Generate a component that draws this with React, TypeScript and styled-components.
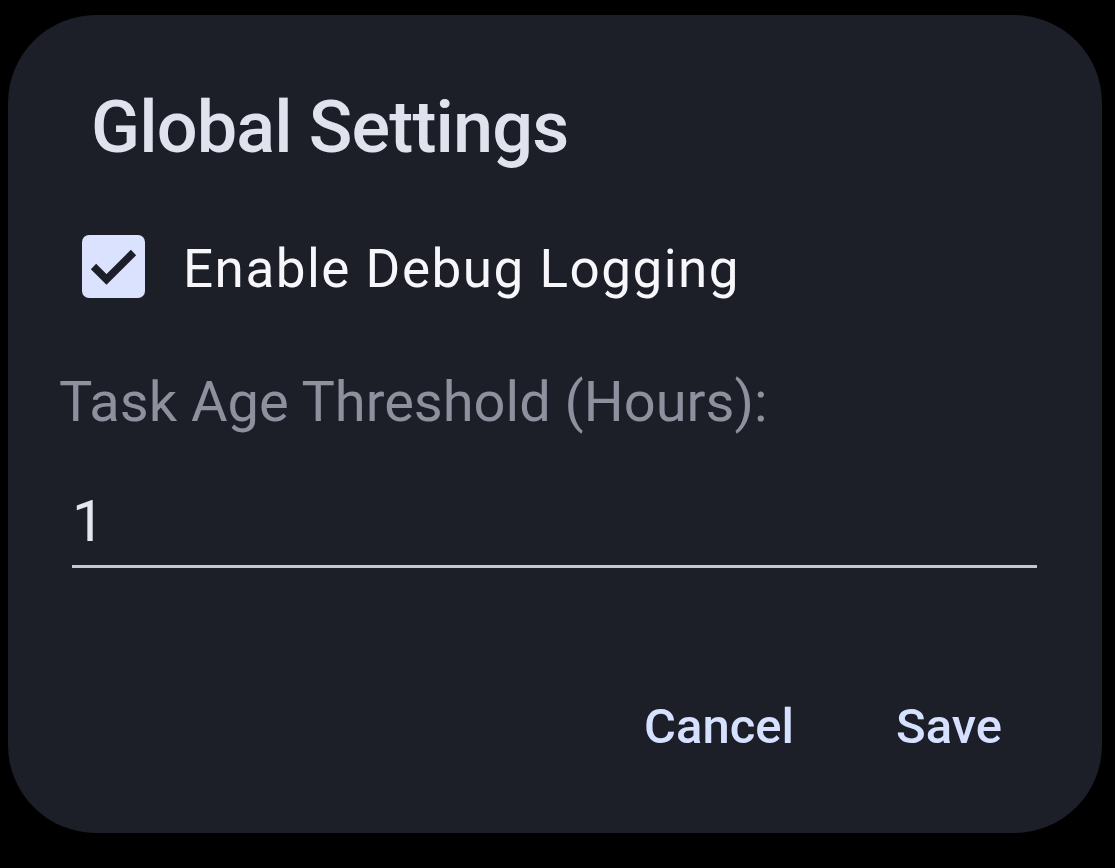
import React, {useState} from "react";
import styled, {createGlobalStyle} from "styled-components";

const GlobalStyle = createGlobalStyle`
    html, body {
        margin: 0;
        padding: 0;
        background: #000;
    }
    body {
        font-family: Roboto, "Noto Sans", sans-serif;
        width: 1115px;
        height: 868px;
        overflow: hidden;
    }
`

export default function App() {
    const [debug, setDebug] = useState(true)
    const [hours, setHours] = useState("1")

    return (
        <>
            <GlobalStyle/>
            <Dialog>
                <Title>Global Settings</Title>
                <CheckRow onClick={() => setDebug(!debug)}>
                    <CheckBox checked={debug}>
                        {debug && (
                            <svg width="63" height="63" viewBox="0 0 63 63">
                                <path d="M11.5 31.5L24.5 44.5L51.5 17.5" fill="none" stroke="#1c1e28"
                                      strokeWidth="7.5"/>
                            </svg>
                        )}
                    </CheckBox>
                    <CheckLabel>Enable Debug Logging</CheckLabel>
                </CheckRow>
                <FieldLabel>Task Age Threshold (Hours):</FieldLabel>
                <FieldWrap>
                    <FieldInput value={hours} onChange={e => setHours(e.target.value)}/>
                </FieldWrap>
                <Actions>
                    <TextButton>Cancel</TextButton>
                    <TextButton>Save</TextButton>
                </Actions>
            </Dialog>
        </>
    )
}

const Dialog = styled.div`
    box-sizing: border-box;
    margin: 15px 0 0 8px;
    width: 1094px;
    height: 818px;
    border-radius: 88px;
    background-color: #1c1e28;
    padding-top: 77px;
    display: flex;
    flex-direction: column;
`
const Title = styled.h2`
    margin: 0 0 71px 83px;
    font-size: 72px;
    line-height: 1;
    font-weight: 500;
    color: #e0e2ee;
    letter-spacing: -0.85px;
`
const CheckRow = styled.div`
    display: flex;
    align-items: center;
    margin-left: 74px;
    cursor: pointer;
    height: 63px;
`
const CheckBox = styled.div<{ checked: boolean }>`
    flex: none;
    width: 63px;
    height: 63px;
    border-radius: 7px;
    box-sizing: border-box;
    background-color: ${props => props.checked ? "#dae2fe" : "transparent"};
    border: ${props => props.checked ? "none" : "4px solid #c5c6d4"};
    display: flex;
    align-items: center;
    justify-content: center;
`
const CheckLabel = styled.span`
    margin-left: 38px;
    padding-top: 6px;
    font-size: 53px;
    line-height: 1;
    letter-spacing: 1.5px;
    color: #f7f7fb;
`
const FieldLabel = styled.div`
    margin: 76px 0 0 51px;
    font-size: 56px;
    line-height: 1;
    color: #8e909e;
`
const FieldWrap = styled.div`
    margin: 62px 65px 0 64px;
    border-bottom: 3px solid #c5c6d4;
    padding-bottom: 15px;
`
const FieldInput = styled.input`
    display: block;
    width: 100%;
    box-sizing: border-box;
    border: none;
    outline: none;
    background: transparent;
    padding: 0;
    font-family: Roboto, sans-serif;
    font-size: 58px;
    line-height: 1;
    height: 58px;
    color: #e3e5ef;
`
const Actions = styled.div`
    margin-top: auto;
    margin-bottom: 82px;
    padding-right: 100px;
    display: flex;
    justify-content: flex-end;
    gap: 102px;
`
const TextButton = styled.button`
    border: none;
    background: transparent;
    padding: 0;
    font-family: Roboto, sans-serif;
    font-size: 49px;
    line-height: 1;
    font-weight: 500;
    color: #d6e0ff;
    cursor: pointer;
`
